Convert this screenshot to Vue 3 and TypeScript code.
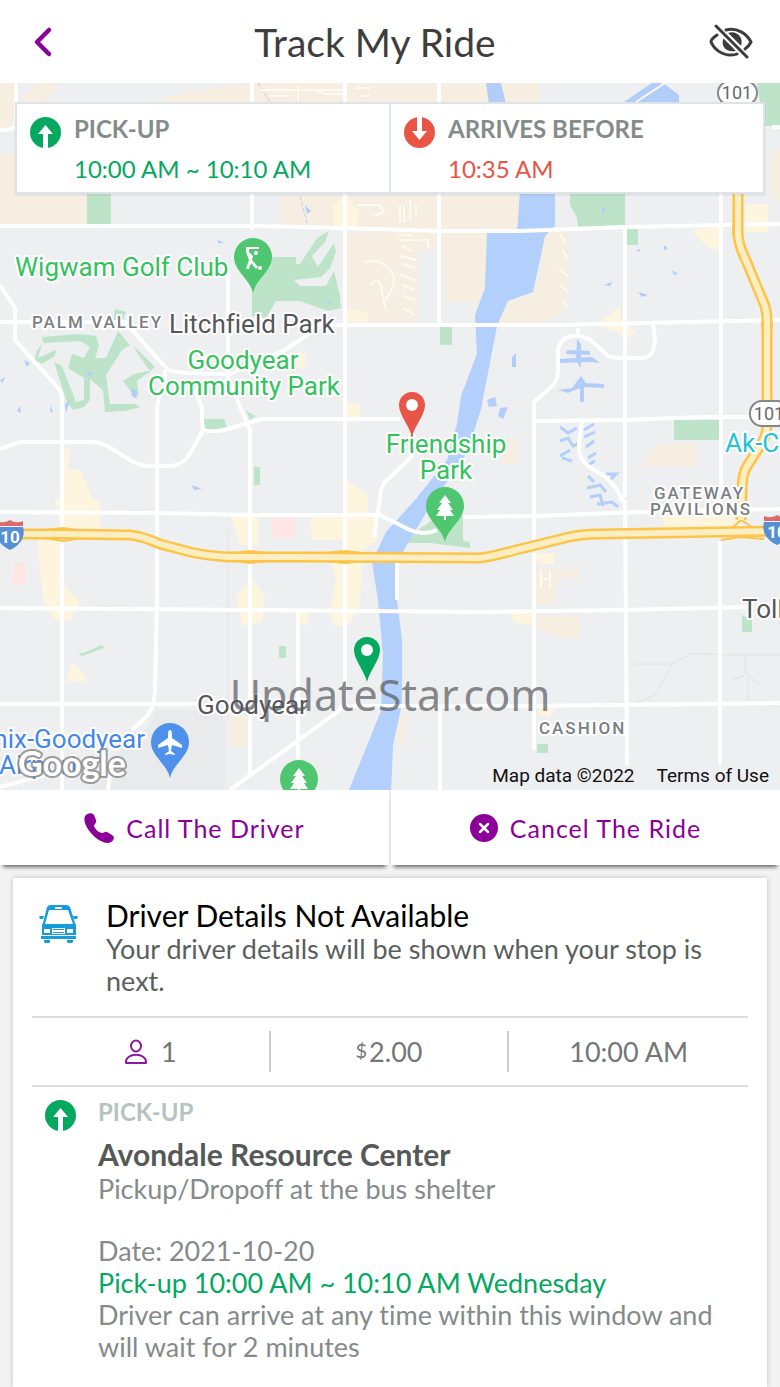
<script setup lang="ts">
interface Label {
  text: string
  x: number
  y: number
  kind: string
  anchor?: 'start' | 'middle' | 'end'
}

const urban: string[] = [
  'M0 83H16V130H0Z',
  'M0 154H16V196H87V224H0Z',
  'M40 83H60L45 102H16Z',
  'M150 102L200 90L250 83V102Z',
  'M250 83H390V102H250Z',
  'M390 83H540V102H390Z',
  'M280 196H345V226H282Z',
  'M347 196H520V230H347Z',
  'M347 232H438V250H418V322H347Z',
  'M442 232H487V290L475 315V302H446Z',
  'M546 232H568L566 310L545 322L480 325L505 302L535 294Z',
  'M640 466L655 445H698V466Z',
  'M536 569H580V578H556V604H536Z',
  'M536 616H580V638H562L536 628Z',
  'M230 716H249V747H230Z',
  'M396 720L410 712L404 745H396Z',
  'M502 438H518V464H502Z',
  'M770 150H780V200H770Z',
]

const business: string[] = [
  'M55 500H100V528H60Z',
  'M65 447L70 450L68 470H80L92 498L98 515H55L62 480Z',
  'M38 540H60V580L80 602L70 620L58 622L45 608L40 575Z',
  'M72 662L86 676V681H66Z',
  'M230 515H258V545H240Z',
  'M310 515H345V540H312Z',
  'M236 595L252 580L265 595L262 622L242 626Z',
  'M347 495H368V512L378 518L376 542L362 550L360 606L348 626H334L330 610L336 580L332 562H345Z',
  'M332 205L347 196L360 212L356 227H334Z',
  'M347 402L360 404V420H347Z',
  'M347 310L368 312V322H347Z',
  'M595 325L608 316L620 306V318L636 332L628 338L610 330Z',
  'M691 230L720 226V250L708 248Z',
  'M745 204H768V232H745Z',
  'M300 350L306 355L304 370L292 366Z',
  'M660 508H740V528H664Z',
  'M536 553H554V564H538Z',
  'M510 610H535V626L514 622Z',
  'M298 610H308V625H298Z',
  'M538 706H556L550 716H540Z',
  'M347 480L366 492V500H347Z',
]

const clinics: string[] = ['M14 563H26V584H12Z', 'M272 518H296V538H272Z']

const parks: string[] = [
  'M87 190H111V225H87Z',
  'M757 83H780V126H764Z',
  'M570 190H625V225L578 227L577 218L570 205Z',
  'M626 229H638V245H626Z',
  'M440 327H452V345H440Z',
  'M674 420H720V440H674Z',
  'M404 543L418 530L440 515H463V541L470 542V548L430 543Z',
  'M279 646H286V658H279Z',
  'M742 615L752 620V632H742Z',
  'M537 744H548V753H537Z',
  'M203 419H224L227 428L206 433L201 428Z',
  'M246 411L256 416L250 420Z',
  'M254 467H260V485H254Z',
  'M252 257H296V264H300L317 238L329 231L325 242L312 256L318 267L334 243L336 252L330 268L321 277L294 280L300 286L326 286L334 271L340 296L341 308L328 311L300 301H276L266 318L252 316Z',
  'M115 309L126 312L121 325L113 320Z',
  'M42 337L80 334L96 336L99 346L95 358H106L118 331L130 345L122 350L106 375L110 404L135 404L140 407L125 411L105 412L103 390L90 379V400L84 407L73 410L66 400L54 362L62 366L76 402L84 400V378L68 368L72 354L84 358L90 347L80 341L44 343Z',
  'M36 352L42 344L38 358L56 350L55 356L42 364L35 360Z',
  'M133 345L155 367L150 371L138 354Z',
  'M152 370L137 381L139 396L131 392L123 381L134 374Z',
  'M78 653H84L102 645L104 648L82 656Z',
]

const river =
  'M487 233H517L520 190H555V226L545 236L533 292L508 301L497 326L481 409L470 444L462 462L435 498L408 543L398 560L397 600L402 640V704L393 745L391 795H347L381 711L383 655L378 600L372 562L386 532L415 500L447 460L457 424L461 396L477 354L475 315L485 288Z'

const ponds: string[] = [
  'M486 83H501L506 104H489Z',
  'M652 83H663L679 95V104H621Z',
  'M487 400L495 397L497 406L489 407Z',
  'M500 408L508 407L503 419L498 416Z',
  'M512 357L516 353V367H512Z',
  'M577 339L581 344V368L576 361Z',
  'M567 350L590 351V355L566 354Z',
  'M560 359L592 357L600 363L590 362L560 363Z',
  'M581 376L586 383L604 384V388L584 387V402H580V388L568 393L558 390L572 388Z',
  'M24 360L30 363L27 367Z',
  'M85 370L93 373L90 377Z',
  'M131 388L136 390L137 399L132 396Z',
  'M51 405L53 413L50 411Z',
  'M65 404L70 400L66 413Z',
  'M17 411L20 406L21 413Z',
  'M0 380L6 377L2 383Z',
  'M192 485L202 489L194 490Z',
  'M218 240L224 243H218Z',
  'M604 285L612 282L610 286Z',
  'M637 249L641 250L638 252Z',
  'M664 245L668 249L664 250Z',
  'M672 270L678 274L674 275Z',
  'M638 292L648 295L642 297Z',
  'M602 205L605 209L603 217Z',
  'M305 205L311 211L307 214Z',
  'M324 300L333 302L330 303Z',
]

const canals =
  'M560 427L568 433L577 428M560 441L568 438L573 446L580 443M560 456L570 450M562 458L572 461M584 430L594 424M584 437L595 432M586 447L594 441M588 458L596 453M586 466L595 461M588 476L594 482M587 488L600 485L606 492M590 497L600 495L603 506M606 474L616 474L610 480M597 504L612 502L618 507'

const roads: string[] = [
  'M0 226H250L345 228L440 231L520 231L625 227L780 224',
  'M0 322H125L168 370Q178 374 230 374L285 350L322 325H560L780 320',
  'M345 419H400',
  'M0 449L20 442H95Q105 443 130 460Q140 466 150 466H170Q185 465 192 450L203 430Q214 433 228 429L262 419H345',
  'M535 421L625 420L700 417H750',
  'M0 512L160 513L250 515H380L410 530Q425 536 437 530',
  'M463 517L535 516L640 512L780 509',
  'M0 608L250 610L480 612L625 610L750 607',
  'M0 704H200',
  'M340 706H520L780 703',
  'M0 285L15 308V340L58 388Q62 393 62 400V790',
  'M16 83V125Q14 130 0 130',
  'M252 83V230',
  'M228 270V378L250 430V775L230 790',
  'M195 390L202 408V420L203 430',
  'M165 370V385Q157 400 157 410V600L155 690Q154 710 145 718L132 730',
  'M0 787L45 775M110 775L108 790',
  'M345 83V700L340 710L230 790',
  'M439 83V325',
  'M625 226V495L620 500M625 500L627 765',
  'M721 83V490M720 541V765',
  'M534 555V500V402L550 388Q558 382 558 370V350Q560 338 572 336Q586 334 596 345L607 355Q612 358 620 358H642Q654 358 655 340L653 322M578 328V336',
  'M534 555V750',
  'M298 612V770',
  'M440 706V790',
  'M413 455L385 482Q380 488 380 498L374 537',
  'M582 421L579 445Q578 462 596 471Q614 480 622 500',
  'M397 560V600',
  'M772 127H780',
]

const lanes =
  'M665 83L636 102M365 262Q380 258 390 270T385 300M370 285Q380 275 382 290T386 310M398 235H412M400 240H415M402 245L412 252M400 256L416 260M402 264L415 268M400 275L415 280M402 285L415 290M403 296L415 300M403 308L415 315M400 205V222M404 205V222M410 200V220M416 205V215M357 205H380L384 212L374 216M418 240H428V248M260 90H345M270 96H290M298 86V102M300 90H316L325 94H342M355 88H370M360 96H370M560 235L566 242M562 250L568 258M559 270L568 276M560 285L568 292M562 300L567 306M541 570V588M550 570V588M541 579H550'

const freeways: string[] = [
  'M20 534H62L130 535Q142 536 160 544L190 552Q208 556 230 557L300 557L480 558Q490 557 520 549L565 538Q580 534 600 534L780 531',
  'M738 190V232Q738 244 745 258L765 306Q767 312 767 320V425Q767 436 760 446L746 468Q742 476 742 490L741 520',
]

const ramps =
  'M45 530L63 528L82 531M45 538L63 541L82 538M140 540L155 547M235 553L250 551L268 553M235 561L250 563L268 561M325 553L345 551L362 553M325 561L345 563L362 561M733 527L741 520L752 527M721 540L740 537L764 539M734 210L733 236M742 210V236M762 322L763 335M772 322L771 335'

const labels: Label[] = [
  { text: 'Wigwam Golf Club', x: 15, y: 276, kind: 'park' },
  { text: 'PALM VALLEY', x: 32, y: 328, kind: 'district' },
  { text: 'Litchfield Park', x: 169, y: 333, kind: 'town' },
  { text: 'Goodyear', x: 243, y: 369, kind: 'park', anchor: 'middle' },
  { text: 'Community Park', x: 244, y: 395, kind: 'park', anchor: 'middle' },
  { text: 'Friendship', x: 446, y: 453, kind: 'park', anchor: 'middle' },
  { text: 'Park', x: 446, y: 479, kind: 'park', anchor: 'middle' },
  { text: 'GATEWAY', x: 654, y: 499, kind: 'district' },
  { text: 'PAVILIONS', x: 650, y: 515, kind: 'district' },
  { text: 'Ak-Chin', x: 725, y: 452, kind: 'venue' },
  { text: 'Tolleson', x: 742, y: 618, kind: 'town' },
  { text: 'CASHION', x: 539, y: 734, kind: 'district' },
  { text: 'Goodyear', x: 197, y: 714, kind: 'town' },
  { text: 'Phoenix-Goodyear', x: 145, y: 748, kind: 'airport', anchor: 'end' },
  { text: 'Airport', x: -1, y: 774, kind: 'airport' },
]

const poiPins = [
  { x: 253, y: 257, glyph: 'golf', fill: '#4fc670' },
  { x: 445, y: 506, glyph: 'tree', fill: '#4fc670' },
  { x: 299, y: 779, glyph: 'tree', fill: '#4fc670' },
  { x: 170, y: 742, glyph: 'plane', fill: '#4e91ea' },
]

const stopPins = [
  { x: 412, y: 405, fill: '#e85546' },
  { x: 367, y: 650, fill: '#05a85f' },
]

const shields = [
  { x: 10, y: 535 },
  { x: 777, y: 530 },
]

const windows = [
  { id: 'pickup', title: 'PICK-UP', time: '10:00 AM ~ 10:10 AM' },
  { id: 'arrival', title: 'ARRIVES BEFORE', time: '10:35 AM' },
]
</script>

<template>
  <div class="page">
    <header class="topbar">
      <button class="icon-button back" type="button" aria-label="Back">
        <svg width="20" height="32" viewBox="0 0 20 32">
          <path d="M16 4L4 16L16 28" fill="none" stroke="#8b0099" stroke-width="4.500" stroke-linecap="round" stroke-linejoin="round" />
        </svg>
      </button>
      <h1>Track My Ride</h1>
      <button class="icon-button hide" type="button" aria-label="Hide map">
        <svg width="44" height="36" viewBox="0 0 44 36">
          <path d="M15 13C11 21 16 29 27 27ZM19 9C28 6 35 14 32 22Z" fill="#3c3c3c" />
          <path d="M6 1L39 34" stroke="#fff" stroke-width="7" />
          <g fill="none" stroke="#3c3c3c" stroke-width="3" stroke-linecap="round">
            <path d="M8 11C5 13 2 16 2 18C5 25 12 31 22 31C24 31 26 31 28 30" />
            <path d="M17 6C28 3 38 10 42 18C41 20 39 23 36 25" />
            <path d="M7 2L38 33" />
          </g>
        </svg>
      </button>
    </header>

    <section class="map" aria-label="Ride map">
      <svg class="map-canvas" viewBox="0 83 780 707">
        <rect y="83" width="780" height="707" fill="#edeff1" />
        <path v-for="d in urban" :key="d" :d="d" fill="#f6eee1" />
        <path d="M90 790H225V710H157L150 725L120 750Z" fill="#e8eaec" />
        <path v-for="d in business" :key="d" :d="d" fill="#fdf5de" />
        <path v-for="d in clinics" :key="d" :d="d" fill="#fde6e4" />
        <path v-for="d in parks" :key="d" :d="d" fill="#bde4c8" />
        <path :d="river" fill="#b3cffb" />
        <path v-for="d in ponds" :key="d" :d="d" fill="#b3cdfa" />
        <path :d="canals" fill="none" stroke="#b3cffb" stroke-width="3" />
        <path
          d="M633 664H672L690 654Q700 653 721 655H780M672 664L655 695L635 703M745 656V675L732 680M745 672L760 685M748 675V700M228 530V720"
          fill="none"
          stroke="#e0e2e6"
        />
        <path d="M258 83L270 102M300 196L308 226" fill="none" stroke="#c3c8ee" stroke-dasharray="4 2" />
        <path :d="lanes" fill="none" stroke="#fffaf0" stroke-width="2" />
        <path v-for="d in roads" :key="d" class="road" :d="d" />
        <path :d="ramps" fill="none" stroke="#fbc44c" stroke-width="2" />
        <path v-for="d in freeways" :key="'edge' + d" :d="d" fill="none" stroke="#fdc447" stroke-width="11" />
        <path v-for="d in freeways" :key="'core' + d" :d="d" fill="none" stroke="#fdedc2" stroke-width="6" />

        <g class="route">
          <rect x="718" y="81" width="39" height="24" rx="12" />
          <text x="737" y="99">101</text>
          <rect x="750" y="401" width="39" height="25" rx="12" />
          <text x="769" y="420">101</text>
        </g>
        <g v-for="s in shields" :key="s.x" class="interstate" :transform="`translate(${s.x} ${s.y})`">
          <path d="M-13 -8H13C16 3 9 11 0 15C-9 11 -16 3 -13 -8Z" fill="#5590d6" />
          <path d="M-13 -14Q-6 -11 0 -15Q6 -11 13 -14V-9H-13Z" fill="#dc6a6c" />
          <text x="0" y="8">10</text>
        </g>

        <text v-for="l in labels" :key="l.text + l.y" :x="l.x" :y="l.y" :class="['label', l.kind]" :text-anchor="l.anchor ?? 'start'">{{ l.text }}</text>

        <g v-for="p in poiPins" :key="p.x" :transform="`translate(${p.x} ${p.y})`">
          <path d="M0 36C-3 22 -19 14 -19 0A19 19 0 0 1 19 0C19 14 3 22 0 36Z" :fill="p.fill" />
          <path v-if="p.glyph === 'tree'" fill="#fff" d="M0 -11L6 -3H3L8 4H5L9 10H1V14H-1V10H-9L-5 4H-8L-3 -3H-6Z" />
          <path v-else-if="p.glyph === 'plane'" fill="#fff" d="M0 -12C2 -12 2 -9 2 -4L12 3V6L2 3L1 9L5 12V13L0 12L-5 13V12L-1 9L-2 3L-12 6V3L-2 -4C-2 -9 -2 -12 0 -12Z" />
          <g v-else fill="#fff">
            <path d="M-7 -10H6V-8H-4V-5L0 -1L-1 3L5 10L3 12L-2 6L-4 12H-7L-4 3L-7 -5Z" />
            <circle cx="3" cy="-4" r="2" />
            <circle cx="7" cy="11" r="2" />
          </g>
        </g>

        <g v-for="p in stopPins" :key="p.x" :transform="`translate(${p.x} ${p.y})`">
          <path d="M0 32C-3 20 -13 10 -13 0A13 13 0 0 1 13 0C13 10 3 20 0 32Z" :fill="p.fill" />
          <circle r="6" fill="#fff" />
        </g>

        <text class="brand" x="18" y="776">Google</text>
        <text class="watermark" x="390" y="711">UpdateStar.com</text>
      </svg>

      <dl class="windows">
        <div v-for="w in windows" :key="w.id" :class="['window', w.id]">
          <svg class="badge" viewBox="0 0 31 31">
            <circle cx="15.500" cy="15.500" r="15.500" />
            <path v-if="w.id === 'pickup'" d="M15.500 8L23 17H18V31H13V17H8Z" fill="#fff" />
            <path v-else d="M15.500 23L23 14H18V0H13V14H8Z" fill="#fff" />
          </svg>
          <dt>{{ w.title }}</dt>
          <dd>{{ w.time }}</dd>
        </div>
      </dl>

      <footer class="attribution">
        <span>Map data ©2022</span>
        <a href="#terms">Terms of Use</a>
      </footer>
    </section>

    <nav class="actions" aria-label="Ride actions">
      <button type="button">
        <svg width="30" height="30" viewBox="0 0 30 30">
          <path d="M1 3C3 0 8 -1 10 2L12 7C13 10 10 11 10 13C11 16 15 20 18 20C20 20 21 18 23 19L28 22C31 24 30 27 27 29C22 32 13 27 8 21C2 15 -1 7 1 3Z" fill="#8b0099" />
        </svg>
        <span>Call The Driver</span>
      </button>
      <button type="button">
        <svg width="28" height="28" viewBox="0 0 28 28">
          <circle cx="14" cy="14" r="14" fill="#8b0099" />
          <path d="M10 10L18 18M18 10L10 18" stroke="#fff" stroke-width="2.500" stroke-linecap="round" />
        </svg>
        <span>Cancel The Ride</span>
      </button>
    </nav>

    <main class="card">
      <section class="driver">
        <svg width="40" height="40" viewBox="0 0 40 40">
          <g fill="#169bdb">
            <path fill-rule="evenodd" d="M8 2Q9 0 12 0H27Q30 0 31 2L36 18L37 20V30H3V20L4 18ZM10 5L6 19H34L29 5ZM16 2V4H23V2ZM5 24V28H11V24ZM28 24V28H34V24ZM13 23V29H26V23Z" />
            <path d="M14 24H25V25H14ZM14 27H25V28H14ZM2 31H37V34H2ZM5 35H11V37L10 38H6L5 37ZM28 35H34V37L33 38H29L28 37ZM0 12L1 11H5L4 14H1ZM34 11H38L39 12L38 14H35Z" />
          </g>
        </svg>
        <div>
          <h2>Driver Details Not Available</h2>
          <p>Your driver details will be shown when your stop is next.</p>
        </div>
      </section>

      <ul class="facts">
        <li>
          <svg width="24" height="26" viewBox="0 0 24 26" role="img" aria-label="Passengers">
            <g fill="none" stroke="#8b1a9b" stroke-width="2" stroke-linejoin="round">
              <ellipse cx="12" cy="7" rx="5" ry="5.500" />
              <path d="M2 24C1 13 23 13 22 24Z" />
            </g>
          </svg>
          <span>1</span>
        </li>
        <li><span><small>$</small>2.00</span></li>
        <li><span>10:00 AM</span></li>
      </ul>

      <section class="stop">
        <svg class="badge" viewBox="0 0 31 31">
          <circle cx="15.500" cy="15.500" r="15.500" />
          <path d="M15.500 8L23 17H18V31H13V17H8Z" fill="#fff" />
        </svg>
        <div>
          <h3>PICK-UP</h3>
          <h2>Avondale Resource Center</h2>
          <p>Pickup/Dropoff at the bus shelter</p>
          <p class="date">Date: 2021-10-20</p>
          <p class="when">Pick-up 10:00 AM ~ 10:10 AM Wednesday</p>
          <p>Driver can arrive at any time within this window and will wait for 2 minutes</p>
        </div>
      </section>
    </main>
  </div>
</template>

<style>
body {
  margin: 0;
  background: #f3f3f3;
}
</style>

<style scoped>
.page {
  display: flex;
  flex-direction: column;
  min-height: 100vh;
  font-family: Lato, sans-serif;
  font-variant-ligatures: none;
  color: #858b8a;
}

h1,
h2,
h3,
p,
dl,
dt,
dd,
ul {
  margin: 0;
  padding: 0;
}

button {
  border: 0;
  margin: 0;
  padding: 0;
  background: #fff;
  font: inherit;
  cursor: pointer;
}

.topbar {
  display: grid;
  grid-template-columns: 1fr auto 1fr;
  align-items: center;
  height: 83px;
  padding: 0 27px 0 17px;
  background: #fff;
}

.topbar h1 {
  padding-right: 20px;
  font-size: 39px;
  line-height: 48px;
  font-weight: 400;
  color: #3e3e3e;
}

.icon-button svg {
  display: block;
}

.back {
  justify-self: start;
  padding: 0 16px;
}

.hide {
  justify-self: end;
}

.map {
  position: relative;
}

.map-canvas {
  display: block;
  width: 100%;
  height: auto;
  font-family: Roboto, sans-serif;
}

.road {
  fill: none;
  stroke: #fff;
  stroke-width: 4;
  stroke-linejoin: round;
}

.label {
  font-size: 26px;
  paint-order: stroke;
  stroke: #fff;
  stroke-width: 4px;
  stroke-linejoin: round;
}

.park {
  fill: #34c25e;
}

.town {
  fill: #54575b;
}

.venue {
  fill: #22c3d6;
}

.airport {
  fill: #4587e8;
}

.district {
  font-size: 17px;
  font-weight: 500;
  letter-spacing: 2px;
  fill: #7b7e82;
}

.route rect {
  fill: #fff;
  stroke: #85878a;
  stroke-width: 2;
}

.route text {
  font-size: 18px;
  fill: #66686b;
  text-anchor: middle;
}

.interstate text {
  font-size: 17px;
  font-weight: 700;
  fill: #fff;
  text-anchor: middle;
}

.brand {
  font-family: Lato, sans-serif;
  font-size: 34px;
  font-weight: 700;
  fill: #fff;
  stroke: #8c8c8c;
  stroke-opacity: 0.85;
  stroke-width: 4px;
  stroke-linejoin: round;
  paint-order: stroke;
}

.watermark {
  font-family: "Noto Sans", sans-serif;
  font-size: 43px;
  fill: #55575b;
  fill-opacity: 0.7;
  text-anchor: middle;
}

.windows {
  position: absolute;
  top: 19px;
  left: 15px;
  right: 15px;
  display: grid;
  grid-template-columns: 1fr 1fr;
  gap: 2px;
  border: 2px solid #dde3e6;
  background: #dde3e6;
  box-shadow: 0 1px 2px rgba(0, 0, 0, 0.1);
}

.window {
  display: grid;
  grid-template-columns: 31px 1fr;
  column-gap: 13px;
  padding: 5px 13px 4px;
  background: #fff;
}

.badge {
  width: 31px;
  height: 31px;
  fill: #05a85f;
}

.window .badge {
  margin-top: 8px;
}

.arrival .badge {
  fill: #e85546;
}

.window dt {
  font-size: 24px;
  line-height: 40px;
  font-weight: 700;
}

.window dd {
  grid-column: 2;
  font-size: 24px;
  line-height: 39px;
  color: #05a85f;
}

.window.arrival dd {
  color: #e85546;
}

.attribution {
  position: absolute;
  right: 11px;
  bottom: 2px;
  display: flex;
  gap: 22px;
  font-family: Roboto, sans-serif;
  font-size: 19px;
  line-height: 24px;
  color: #111;
}

.attribution a {
  color: inherit;
  text-decoration: none;
}

.actions {
  display: grid;
  grid-template-columns: 1fr 1fr;
  gap: 2px;
  background: #eceeee;
}

.actions button {
  display: flex;
  align-items: center;
  justify-content: center;
  gap: 12px;
  height: 75px;
  color: #8b0099;
  font-size: 25px;
  letter-spacing: 1px;
  box-shadow: 0 5px 4px -3px rgba(0, 0, 0, 0.6);
}

.card {
  flex: 1;
  margin: 13px 13px 0;
  padding: 20px 19px 22px;
  background: #fff;
  box-shadow: 0 0 5px rgba(0, 0, 0, 0.22);
}

.card p {
  font-size: 27px;
  line-height: 32px;
}

.driver {
  display: flex;
  gap: 27px;
  padding: 0 0 19px 7px;
}

.driver svg {
  flex: none;
  margin-top: 7px;
}

.driver h2 {
  margin-bottom: 1px;
  font-size: 30px;
  line-height: 34px;
  font-weight: 400;
  color: #000;
}

.driver p {
  color: #5b5f5e;
}

.facts {
  display: grid;
  grid-template-columns: 1fr 1fr 1fr;
  padding: 13px 0;
  border-top: 2px solid #dcdddd;
  border-bottom: 2px solid #dcdddd;
  list-style: none;
  font-size: 27px;
  color: #737777;
}

.facts li {
  display: flex;
  align-items: center;
  justify-content: center;
  gap: 13px;
  height: 41px;
}

.facts li:not(:last-child) {
  border-right: 2px solid #c8cecf;
}

.facts small {
  margin-right: 2px;
  font-size: 20px;
  vertical-align: 4px;
}

.stop {
  display: flex;
  gap: 22px;
  padding: 13px 0 0 13px;
}

.stop .badge {
  flex: none;
}

.stop h3 {
  font-size: 24px;
  line-height: 24px;
  font-weight: 700;
  color: #b6c3c3;
}

.stop h2 {
  margin-top: 12px;
  font-size: 30px;
  line-height: 37px;
  font-weight: 700;
  color: #555958;
}

.stop .date {
  margin-top: 30px;
}

.stop .when {
  color: #05a85f;
}
</style>
